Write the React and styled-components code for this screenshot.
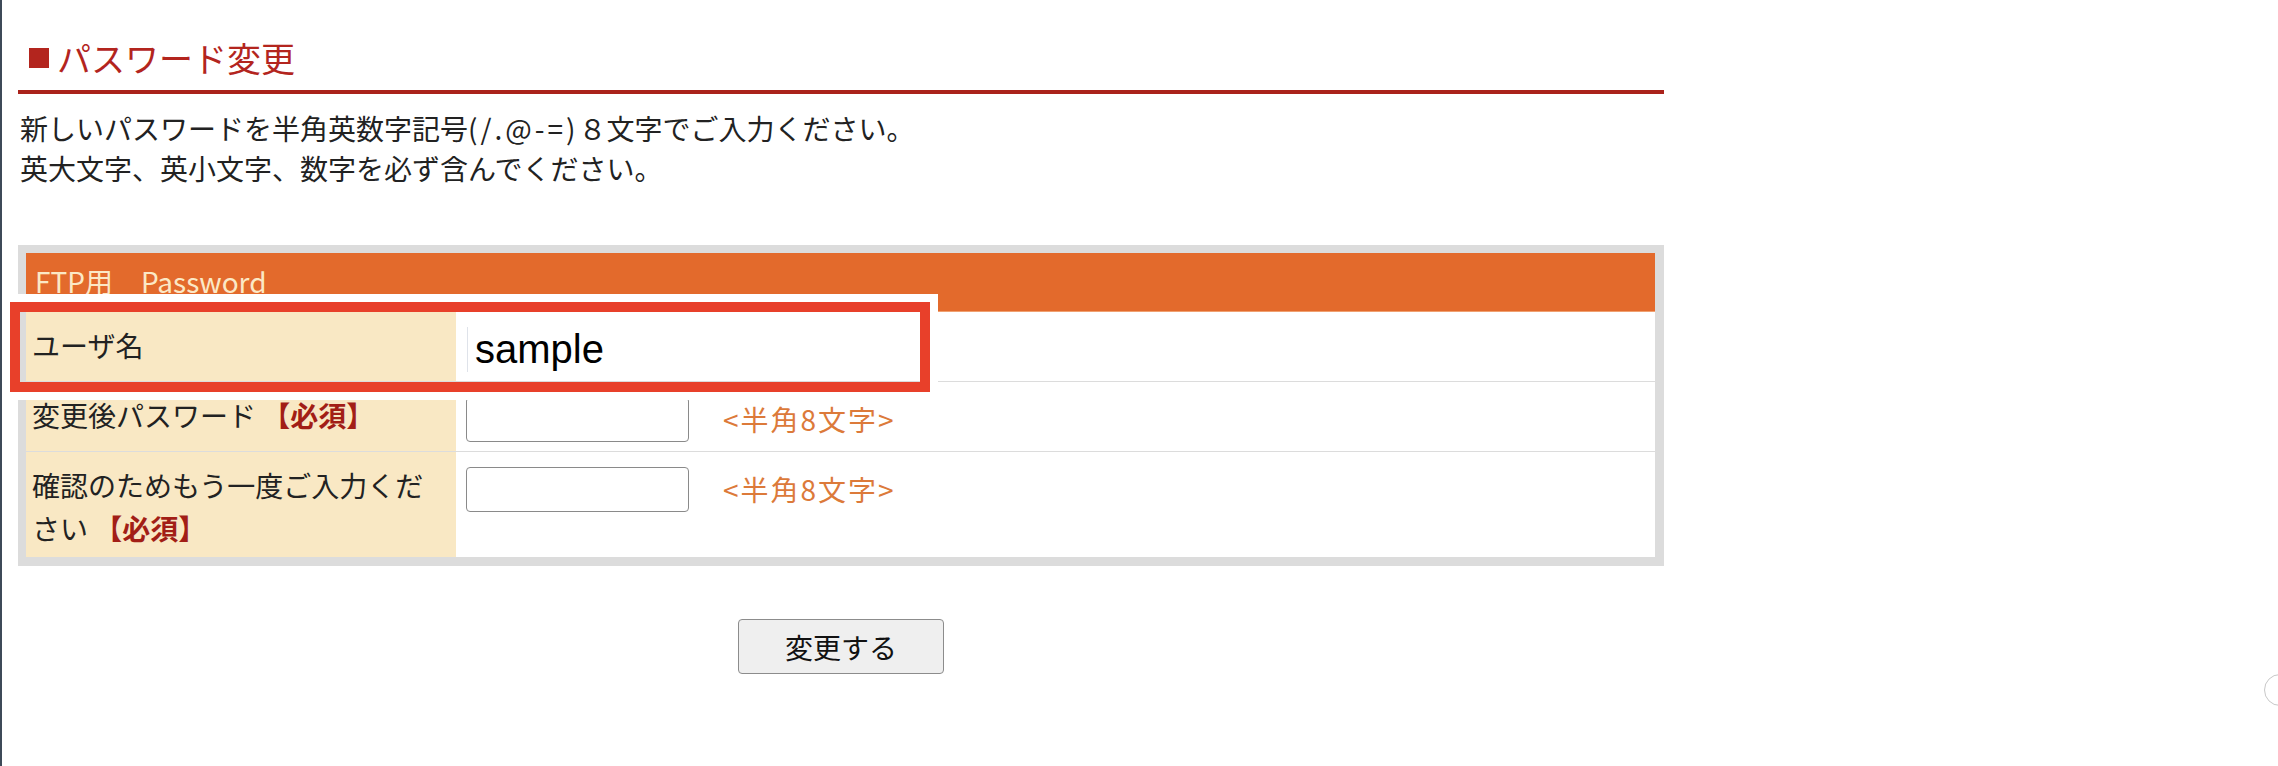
import React from "react";
import styled, { createGlobalStyle } from "styled-components";

const GlobalStyle = createGlobalStyle`
  html, body {
    margin: 0;
    padding: 0;
    background: #ffffff;
  }
  body {
    font-family: "Noto Sans CJK JP", "Noto Sans", sans-serif;
    color: #222;
  }
`;

const Page = styled.div`
  min-height: 766px;
  box-sizing: border-box;
  border-left: 2px solid #3e4a58;
  padding: 35px 0 0 16px;
  position: relative;
  overflow: hidden;
`;

const Content = styled.div`
  width: 1646px;
  display: flex;
  flex-direction: column;
`;

const Title = styled.h2`
  margin: 0;
  font-weight: 400;
  font-size: 34px;
  line-height: 46px;
  color: #b3251e;
  padding: 0 0 9px 11px;
  border-bottom: 4px solid #aa221b;
  display: flex;
  align-items: center;
  gap: 8px;
  &::before {
    content: "";
    width: 20px;
    height: 20px;
    background: #b3251e;
    flex: none;
  }
`;

const Lead = styled.p`
  margin: 14px 0 0 2px;
  font-size: 28px;
  line-height: 40px;
  color: #222;
`;

const Symbols = styled.span`
  letter-spacing: 3px;
`;

const Frame = styled.div`
  position: relative;
  margin-top: 57px;
  background: #dcdcdc;
  padding: 8px 9px 9px 8px;
`;

const Header = styled.div`
  background: #e36a2c;
  color: #fbe8c6;
  height: 59px;
  font-size: 28px;
  line-height: 57px;
  padding-left: 9px;
  white-space: pre;
  border-bottom: 1px solid #f0a070;
  box-sizing: border-box;
`;

const Row = styled.div`
  display: grid;
  grid-template-columns: 430px 1fr;
  background: #ffffff;
  border-bottom: ${(p) => (p.$last ? "none" : "1px solid #dcdcdc")};
`;

const Label = styled.div`
  background: #f9e8c4;
  font-size: 28px;
  line-height: 43px;
  padding: 12px 20px 7px 6px;
  color: #222;
`;

const Required = styled.span`
  color: #a21e16;
  font-weight: 700;
`;

const Value = styled.div`
  display: flex;
  align-items: flex-start;
  padding: 15px 10px 9px 10px;
  gap: 34px;
`;

const TextInput = styled.input`
  width: 223px;
  height: 45px;
  box-sizing: border-box;
  border: 1px solid #8a8a8a;
  border-radius: 4px;
  background: #fff;
  margin: 0;
  flex: none;
`;

const Hint = styled.span`
  font-size: 28px;
  line-height: 45px;
  color: #dc7a3a;
  letter-spacing: 2px;
`;

const Sample = styled.span`
  display: block;
  font-family: "Liberation Sans", Arial, sans-serif;
  font-size: 40px;
  line-height: 45px;
  color: #000;
  padding-left: 7px;
  margin-left: 1px;
  border-left: 1px solid #dfe3ea;
`;

const Highlight = styled.div`
  position: absolute;
  left: -8px;
  top: 57px;
  width: 920px;
  height: 90px;
  box-sizing: border-box;
  border: 10px solid #e8402a;
  box-shadow: 0 0 0 8px #ffffff;
  pointer-events: none;
`;

const ButtonBar = styled.div`
  display: flex;
  justify-content: center;
  margin-top: 53px;
`;

const SubmitButton = styled.button`
  width: 206px;
  height: 55px;
  background: #efefef;
  border: 1px solid #8c8c8c;
  border-radius: 4px;
  font-family: "Noto Sans CJK JP", sans-serif;
  font-size: 28px;
  color: #111;
  padding: 0;
`;

const EdgeCircle = styled.div`
  position: absolute;
  right: -18px;
  top: 674px;
  width: 30px;
  height: 30px;
  border-radius: 50%;
  border: 1px solid #c8c8c8;
  background: #fff;
`;

export default function App() {
  return (
    <>
      <GlobalStyle />
      <Page>
        <Content>
          <Title>パスワード変更</Title>
          <Lead>
            新しいパスワードを半角英数字記号<Symbols>(/.@-=)</Symbols>８文字でご入力ください。
            <br />
            英大文字、英小文字、数字を必ず含んでください。
          </Lead>
          <Frame>
            <Header>FTP用　Password</Header>
            <Row>
              <Label>ユーザ名</Label>
              <Value>
                <Sample>sample</Sample>
              </Value>
            </Row>
            <Row>
              <Label>
                変更後パスワード <Required>【必須】</Required>
              </Label>
              <Value>
                <TextInput type="password" />
                <Hint>&lt;半角8文字&gt;</Hint>
              </Value>
            </Row>
            <Row $last>
              <Label>
                確認のためもう一度ご入力ください <Required>【必須】</Required>
              </Label>
              <Value>
                <TextInput type="password" />
                <Hint>&lt;半角8文字&gt;</Hint>
              </Value>
            </Row>
            <Highlight />
          </Frame>
          <ButtonBar>
            <SubmitButton type="button">変更する</SubmitButton>
          </ButtonBar>
        </Content>
        <EdgeCircle />
      </Page>
    </>
  );
}
